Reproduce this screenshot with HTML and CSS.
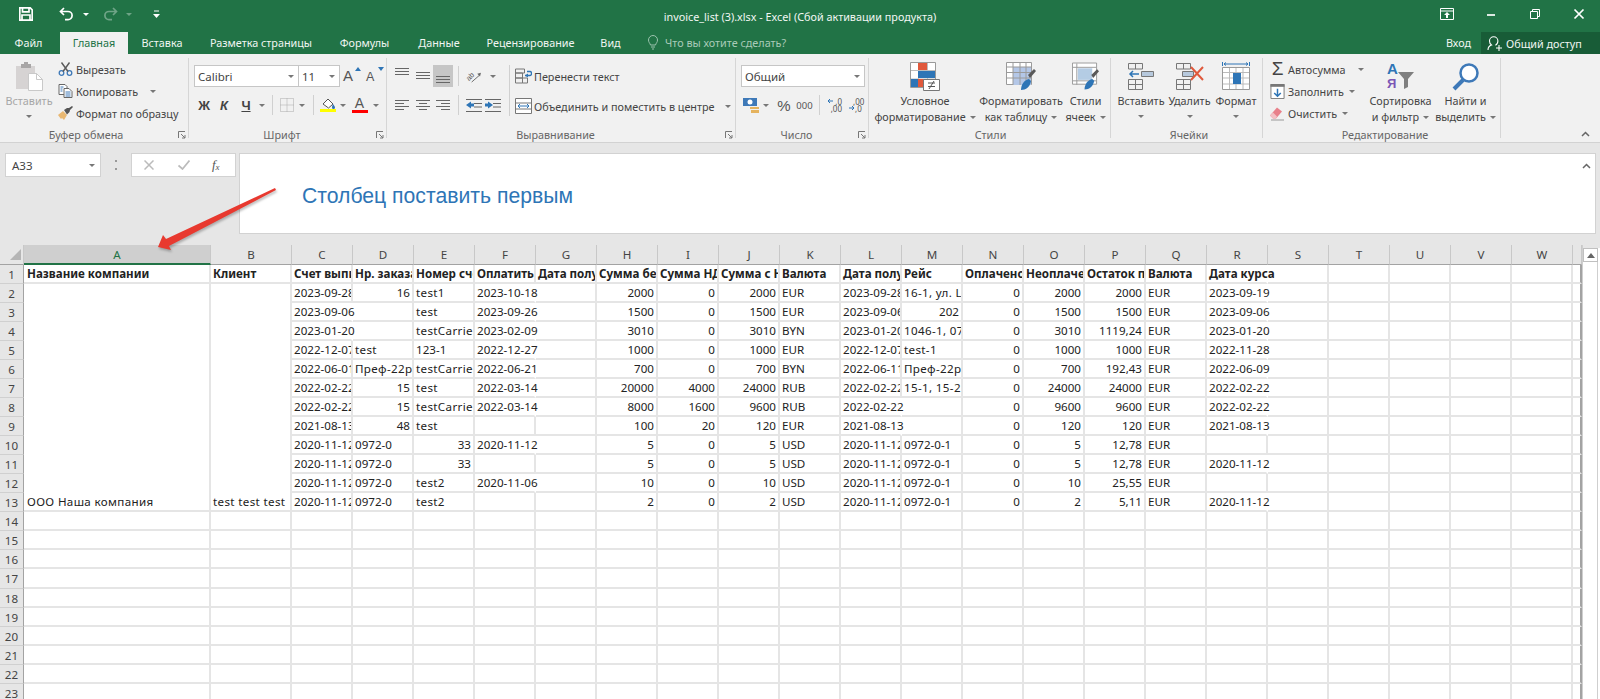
FILE: index.html
```html
<!DOCTYPE html>
<html lang="ru">
<head>
<meta charset="utf-8">
<title>invoice_list (3).xlsx - Excel</title>
<link rel="stylesheet" href="styles.css">
</head>
<body>
<div class="app">
  <header class="titlebar">
    <div class="qat">
      <svg class="q-save" viewBox="0 0 14 14"><path class="wt" d="M.8.8h10.400l2 2v10.400H.8zM3.500.8v4h6.500v-4M3 13.200V8h8v5.200"/></svg>
      <svg class="q-undo" viewBox="0 0 15 14"><path class="wt" d="M5 1 1.500 4.500 5 8M1.500 4.500H9a4 4 0 0 1 0 8.200H6"/></svg>
      <span class="caret white q-c1"></span>
      <svg class="q-redo" viewBox="0 0 15 14"><path class="wt" d="M10 1l3.500 3.500L10 8M13.500 4.500H6a4 4 0 0 0 0 8.200h3"/></svg>
      <span class="caret white dim q-c2"></span>
      <svg class="q-more" viewBox="0 0 7 8"><path class="wl" d="M1 1h5"/><path class="wf" d="M0 4h7L3.500 8z"/></svg>
    </div>
    <div class="doc-title">invoice_list (3).xlsx - Excel (Сбой активации продукта)</div>
    <div class="winbtns">
      <svg class="w-ico" viewBox="0 0 14 12"><path class="wl" d="M.5.500h13v11H.5zM.5 3h13"/><path class="wf" d="M7 4l3 3H8v3H6V7H4z"/></svg>
      <svg class="w-ico" viewBox="0 0 14 12"><path class="wt" d="M3 7h8"/></svg>
      <svg class="w-ico" viewBox="0 0 14 12"><path class="wl" d="M2.500 3.500h7v7h-7zM4.500 3.500v-2h7v7h-2"/></svg>
      <svg class="w-ico" viewBox="0 0 14 12"><path class="wt" d="M2.500 1.500l9 9M11.500 1.500l-9 9"/></svg>
    </div>
  </header>

  <nav class="tabbar">
    <div class="tabs">
      <a class="tab tab-file">Файл</a>
      <a class="tab active">Главная</a>
      <a class="tab">Вставка</a>
      <a class="tab">Разметка страницы</a>
      <a class="tab">Формулы</a>
      <a class="tab">Данные</a>
      <a class="tab">Рецензирование</a>
      <a class="tab">Вид</a>
    </div>
    <svg class="bulb" viewBox="0 0 10 15"><path d="M2.500 10C2 8 .5 7.500.5 5a4.500 4.500 0 0 1 9 0c0 2.500-1.500 3-2 5zM3 12h4M4 14h2"/></svg>
    <span class="tell">Что вы хотите сделать?</span>
    <span class="signin">Вход</span>
    <div class="share">
      <svg class="share-ico" viewBox="0 0 15 15"><path d="M1 14c0-3 2-4.500 3.500-5C3 8 2.500 6.500 2.500 5a4.200 4.200 0 0 1 8.400 0c0 2-1 3.500-2.500 4.200M9 12h6M12 9v6"/></svg>
      <span>Общий доступ</span>
    </div>
  </nav>

  <section class="ribbon">
    <div class="group g-clip">
      <div class="gbody">
        <button class="big disabled b-paste">
          <svg class="i-big" viewBox="0 0 27 29"><path fill="#d6d3d3" d="M0 4h19v23H0z"/><path fill="#a8a6a6" d="M5 2h3V0h4v2h3v4H5z"/><path fill="#fff" stroke="#c9c9c9" d="M12.500 11.500h8l6 6v11h-14z"/><path fill="none" stroke="#c9c9c9" d="M20.500 11.500v6h6"/></svg>
          <span>Вставить</span><span class="caret solo"></span>
        </button>
        <div class="smalls s-clip">
          <div class="small"><svg class="i-s" viewBox="0 0 14 14"><circle cx="3" cy="11" r="2.300" fill="none" stroke="#3e79b8" stroke-width="1.300"/><circle cx="11" cy="11" r="2.300" fill="none" stroke="#3e79b8" stroke-width="1.300"/><path fill="none" stroke="#5a5a5a" stroke-width="1.400" d="M3 .5l6.500 9M11 .5L4.500 9.500"/></svg><span>Вырезать</span></div>
          <div class="small"><svg class="i-s" viewBox="0 0 14 14"><path fill="#fff" stroke="#666" d="M.5.500h6l2 2v8h-8z"/><path fill="#fff" stroke="#666" d="M5.500 4.500h5l3 3v6h-8z"/><path stroke="#3e79b8" d="M7 8h5M7 10h5M7 12h5M2 3h3M2 5h2M2 7h2"/></svg><span>Копировать</span><span class="caret c-copy"></span></div>
          <div class="small"><svg class="i-s" viewBox="0 0 15 14"><path fill="#e9b872" d="M0 9l5-4 4 4-3 5-2-2-1 1z"/><path fill="#555" d="M6 4l3-2 2 0 3-2 1 1-3 3-.5 2-2.500 2.500z"/></svg><span>Формат по образцу</span></div>
        </div>
      </div>
      <div class="glabel launch">Буфер обмена</div>
      <svg class="launcher" viewBox="0 0 8 8"><path d="M.5 7V.5H7M3 3l4 4M4 7h3V4"/></svg>
    </div>

    <div class="group g-font">
      <div class="gbody col">
        <div class="row r-font1">
          <div class="select"><span class="sel-t">Calibri</span><span class="caret"></span></div>
          <div class="select sel-size"><span class="sel-t">11</span><span class="caret"></span></div>
          <div class="fontsz"><span class="aa">A</span><svg class="up" viewBox="0 0 6 4"><path fill="#2e75b6" d="M3 0l3 4H0z"/></svg></div>
          <div class="fontsz"><span class="aa sm">A</span><svg class="up" viewBox="0 0 6 4"><path fill="#2e75b6" d="M3 4l3-4H0z"/></svg></div>
        </div>
        <div class="row r-font2">
          <b class="fmt">Ж</b><b class="fmt it">К</b><b class="fmt un">Ч</b><span class="caret"></span>
          <i class="vsep"></i>
          <svg class="i-s14" viewBox="0 0 14 14"><path fill="none" stroke="#aaa" stroke-dasharray="1 1" d="M.5.500h13v13H.5zM7 .5v13M.5 7h13"/></svg><span class="caret"></span>
          <i class="vsep"></i>
          <span class="colored"><svg class="i-fill" viewBox="0 0 15 11"><path fill="#fff" stroke="#555" d="M2 6l5-5 5 5-4.500 4z"/><path fill="#2e75b6" d="M12 6c1 1.500 2 2.500 2 3.500a1 1 0 0 1-3 0c0-1 .5-2 1-3.500z"/></svg><i class="bar yellow"></i></span><span class="caret"></span>
          <span class="colored"><span class="aa-c">A</span><i class="bar red"></i></span><span class="caret"></span>
        </div>
      </div>
      <div class="glabel launch">Шрифт</div>
      <svg class="launcher" viewBox="0 0 8 8"><path d="M.5 7V.5H7M3 3l4 4M4 7h3V4"/></svg>
    </div>

    <div class="group g-align">
      <div class="gbody">
        <div class="col">
          <div class="row r-align">
            <svg class="i-va" viewBox="0 0 14 16"><path d="M0 .5h14M0 3.500h14M0 6.500h14"/></svg>
            <svg class="i-va" viewBox="0 0 14 16"><path d="M0 4.500h14M0 7.500h14M0 10.500h14"/></svg>
            <span class="hl"><svg class="i-va" viewBox="0 0 14 16"><path d="M0 8.500h14M0 11.500h14M0 14.500h14"/></svg></span>
            <i class="vsep"></i>
            <svg class="i-or" viewBox="0 0 17 14"><text class="or-t" transform="translate(3 12) rotate(-45)">ab</text><path fill="none" stroke="#666" d="M6 13l8-7"/><path fill="#666" d="M12 4l4-1-1 4z"/></svg>
            <span class="caret"></span>
          </div>
          <div class="row r-align">
            <svg class="i-al" viewBox="0 0 14 10"><path d="M0 .5h14M0 3.500h9M0 6.500h14M0 9.500h9"/></svg>
            <svg class="i-al" viewBox="0 0 14 10"><path d="M0 .5h14M3 3.500h8M0 6.500h14M3 9.500h8"/></svg>
            <span class="cellc"><svg class="i-al" viewBox="0 0 14 10"><path d="M0 .5h14M5 3.500h9M0 6.500h14M5 9.500h9"/></svg></span>
            <i class="vsep"></i>
            <svg class="i-or" viewBox="0 0 16 13"><path fill="none" stroke="#666" d="M0 .5h16M8 4.500h8M8 8h8M0 12.500h16"/><path fill="#2e75b6" d="M0 6l5-3.500v2h3v3H5v2z"/></svg>
            <svg class="i-or" viewBox="0 0 16 13"><path fill="none" stroke="#666" d="M0 .5h16M8 4.500h8M8 8h8M0 12.500h16"/><path fill="#2e75b6" d="M8 6L3 2.500v2H0v3h3v2z"/></svg>
          </div>
        </div>
        <i class="vsep tall-sep"></i>
        <div class="col wrapcol">
          <div class="small"><svg class="i-w" viewBox="0 0 17 15"><path fill="none" stroke="#777" d="M.5 .5h9v4h-9zM.5 4.500h7v5h-7zM.5 9.500h7v5h-7zM7.500 9.500h5v5h-5z"/><path fill="none" stroke="#2e75b6" stroke-width="1.300" d="M10 7h5c2 0 2-4 0-4h-3"/><path fill="#2e75b6" d="M10 7l3-2v4z"/></svg><span>Перенести текст</span></div>
          <div class="small sm-merge"><svg class="i-w" viewBox="0 0 17 16"><path fill="#fff" stroke="#777" d="M.5.500h16v15H.5z"/><path stroke="#777" d="M1 5h15M1 11h15"/><path fill="#fff" d="M2 6h13v4H2z"/><path stroke="#2e75b6" d="M3 8h11M3 8l2-2M3 8l2 2M14 8l-2-2M14 8l-2 2"/></svg><span>Объединить и поместить в центре</span><span class="caret c-merge"></span></div>
        </div>
      </div>
      <div class="glabel launch">Выравнивание</div>
      <svg class="launcher" viewBox="0 0 8 8"><path d="M.5 7V.5H7M3 3l4 4M4 7h3V4"/></svg>
    </div>

    <div class="group g-num">
      <div class="gbody col">
        <div class="select sel-num"><span class="sel-t">Общий</span><span class="caret"></span></div>
        <div class="row r-num">
          <svg class="i-cur" viewBox="0 0 16 15"><path fill="#3e79b8" d="M0 0h14v8H0z"/><ellipse cx="7" cy="4" rx="2.500" ry="2.500" fill="#fff"/><path fill="#e5b35e" d="M7 9h9v2H7zM8 12h8v3H8z"/></svg>
          <span class="caret"></span>
          <span class="pct">%</span>
          <span class="thou">000</span>
          <i class="vsep"></i>
          <span class="dec"><svg viewBox="0 0 15 14"><path fill="none" stroke="#2e75b6" d="M6 3H1M3 1L1 3l2 2"/></svg><em class="d1">,0</em><em class="d2">,00</em></span>
          <span class="dec"><svg viewBox="0 0 15 14"><path fill="none" stroke="#2e75b6" d="M1 10h5M4 8l2 2-2 2"/></svg><em class="d1 d3">,00</em><em class="d2 d4">,0</em></span>
        </div>
      </div>
      <div class="glabel launch">Число</div>
      <svg class="launcher" viewBox="0 0 8 8"><path d="M.5 7V.5H7M3 3l4 4M4 7h3V4"/></svg>
    </div>

    <div class="group g-styles">
      <div class="gbody">
        <button class="big b-cond">
          <svg class="i-big i-w30" viewBox="0 0 30 29"><path fill="#fff" stroke="#9a9a9a" d="M.5.500h25v25H.5z"/><path stroke="#bdbdbd" d="M8.500 1v24M17.500 1v24M1 8.500h24M1 17h24"/><path fill="#e0593c" d="M8 1h9v7H8z"/><path fill="#2e75b6" d="M8 9h17v7H8z"/><path fill="#e0593c" d="M8 17h8v8H8z"/><path fill="#2e75b6" d="M1 17h7v8H1z"/><path fill="#fff" stroke="#777" d="M13.500 17.500h16v11h-16z"/><path stroke="#555" fill="none" d="M18 21h7M18 24.500h7M19 27l5-8"/></svg>
          <span>Условное</span><span>форматирование<i class="caret in"></i></span>
        </button>
        <button class="big b-tbl">
          <svg class="i-big i-w30" viewBox="0 0 30 29"><path fill="#fff" stroke="#9a9a9a" d="M.5.500h25v22H.5z"/><path fill="#b4c7e7" d="M7 5h18v18H7z"/><path stroke="#9a9a9a" d="M7 1v22M14 1v22M20 1v22M1 5h24M1 10.500h24M1 16h24"/><path fill="#595959" d="M22 13l6-6 2 2-6 7z"/><path fill="#2e75b6" d="M15 28c0-5 3-10 8-11l2 2c-1 6-5 9-10 9z"/></svg>
          <span>Форматировать</span><span>как таблицу<i class="caret in"></i></span>
        </button>
        <button class="big b-cst">
          <svg class="i-big i-w27" viewBox="0 0 28 29"><path fill="#fff" stroke="#9a9a9a" d="M.5.500h25v22H.5z"/><path stroke="#9a9a9a" d="M1 5h24M1 19h24M5 1v22"/><path fill="#b4cce4" d="M6 6h15v12H6z"/><path fill="#595959" d="M20 13l6-6 2 2-6 7z"/><path fill="#2e75b6" d="M13 28c0-5 3-10 8-11l2 2c-1 6-5 9-10 9z"/></svg>
          <span>Стили</span><span>ячеек<i class="caret in"></i></span>
        </button>
      </div>
      <div class="glabel">Стили</div>
    </div>

    <div class="group g-cells">
      <div class="gbody">
        <button class="big b-ins">
          <svg class="i-big i-w26" viewBox="0 0 26 29"><path fill="none" stroke="#777" d="M.5 1.500h14v5.500H.5zM7.500 1.500v5.500M.5 17.500h14v10H.5zM7.500 17.500v10M.5 22.500h14"/><path fill="#b7c9dd" stroke="#777" d="M13.500 9.500h12v5h-12z"/><path fill="none" stroke="#2e75b6" stroke-width="1.500" d="M2 12h9M5 9l-3 3 3 3"/></svg>
          <span>Вставить</span><span class="caret solo"></span>
        </button>
        <button class="big b-del">
          <svg class="i-big i-w28" viewBox="0 0 28 29"><path fill="none" stroke="#777" d="M.5 1.500h14v5.500H.5zM7.500 1.500v5.500M.5 17.500h14v10H.5zM7.500 17.500v10M.5 22.500h14"/><path fill="#b7c9dd" stroke="#777" d="M6.500 9.500h11v5h-11z"/><path fill="none" stroke="#e0593c" stroke-width="2" d="M15 5l12 13M27 5L15 18"/></svg>
          <span>Удалить</span><span class="caret solo"></span>
        </button>
        <button class="big b-fmt">
          <svg class="i-big i-w28" viewBox="0 0 28 29"><path fill="#fff" stroke="#999" d="M.5 5.500h27v22H.5z"/><path stroke="#bbb" d="M7.500 6v21M14 6v21M21 6v21M1 10.500h26M1 16h26M1 22h26"/><path fill="#2e75b6" d="M11 11h8v11h-8z"/><path fill="none" stroke="#2e75b6" d="M.5 0v4M27.500 0v4M2 2h24M2 2l2-1.500M2 2l2 1.500M26 2l-2-1.500M26 2l-2 1.500"/></svg>
          <span>Формат</span><span class="caret solo"></span>
        </button>
      </div>
      <div class="glabel">Ячейки</div>
    </div>

    <div class="group g-edit">
      <div class="gbody">
        <div class="smalls s-edit">
          <div class="small"><span class="sigma">Σ</span><span>Автосумма</span><span class="caret c-sum"></span></div>
          <div class="small"><svg class="i-e" viewBox="0 0 15 16"><path fill="#fff" stroke="#777" d="M.5.500h14v15H.5z"/><path fill="#777" d="M0 0h15v3H0z"/><path fill="none" stroke="#2e75b6" stroke-width="1.600" d="M7.500 5v8M4 9.500l3.500 3.500 3.500-3.500"/></svg><span>Заполнить</span><span class="caret c-fill"></span></div>
          <div class="small"><svg class="i-e" viewBox="0 0 15 14"><path fill="#e8808a" d="M0 9l7-8 5 4-6 7H3z"/><path fill="#f3c0c4" d="M3 12L0 9l3-3 4 4-1 2z"/><path stroke="#999" d="M1 13.500h13"/></svg><span>Очистить</span><span class="caret c-clr"></span></div>
        </div>
        <button class="big b-sort">
          <svg class="i-big i-w28" viewBox="0 0 28 29"><text class="sort-a" x="0" y="12">A</text><text class="sort-z" x="0" y="26">Я</text><path fill="#7f7f7f" d="M11 10h16l-6 7v8l-4 2V17z"/></svg>
          <span>Сортировка</span><span>и фильтр<i class="caret in"></i></span>
        </button>
        <button class="big b-find">
          <svg class="i-big i-w27" viewBox="0 0 27 29"><circle cx="17" cy="11" r="8.500" fill="#fff" stroke="#3e79b8" stroke-width="2.500"/><path stroke="#3e79b8" stroke-width="4" d="M2 27l9-9"/></svg>
          <span>Найти и</span><span>выделить<i class="caret in"></i></span>
        </button>
      </div>
      <div class="glabel">Редактирование</div>
    </div>
    <svg class="collapse" viewBox="0 0 9 6"><path d="M1 5l3.500-3.500L8 5"/></svg>
  </section>

  <section class="formula">
    <div class="namebox"><span>A33</span><span class="caret"></span></div>
    <span class="dots"></span>
    <div class="fbtns">
      <svg class="fx-x" viewBox="0 0 10 10"><path d="M.5.500l9 9M9.500.5l-9 9"/></svg>
      <svg class="fx-c" viewBox="0 0 12 10"><path d="M.5 5.500l4 3.500 7-8.500"/></svg>
      <span class="fx">f<sub>x</sub></span>
    </div>
    <div class="fbar">
      <span class="ftext">Столбец поставить первым</span>
      <svg class="fcollapse" viewBox="0 0 9 6"><path d="M1 5l3.500-3.500L8 5"/></svg>
    </div>
  </section>

  <section class="sheet">
    <table class="grid">
      <colgroup>
        <col class="c-r"><col class="c-a"><col class="c-b">
        <col class="c-n" span="21"><col class="c-x">
      </colgroup>
      <thead>
        <tr>
          <th class="corner"><svg viewBox="0 0 11 11"><path d="M11 0v11H0z"/></svg></th>
          <th class="sel">A</th><th>B</th><th>C</th><th>D</th><th>E</th><th>F</th><th>G</th><th>H</th><th>I</th><th>J</th><th>K</th><th>L</th><th>M</th><th>N</th><th>O</th><th>P</th><th>Q</th><th>R</th><th>S</th><th>T</th><th>U</th><th>V</th><th>W</th><th></th>
        </tr>
      </thead>
      <tbody>
        <tr class="bold"><th>1</th><td class="pa">Название компании</td><td>Клиент</td><td>Счет выписан</td><td>Нр. заказа</td><td>Номер счета</td><td>Оплатить до</td><td>Дата получения</td><td>Сумма без НДС</td><td>Сумма НДС</td><td>Сумма с НДС</td><td>Валюта</td><td>Дата получения</td><td>Рейс</td><td>Оплачено</td><td>Неоплачено</td><td>Остаток по</td><td>Валюта</td><td class="of">Дата курса</td><td></td><td></td><td></td><td></td><td></td><td></td></tr>
        <tr><th>2</th><td rowspan="12" class="t pa">ООО Наша компания</td><td rowspan="12" class="t">test test test</td><td>2023-09-28</td><td class="r">16</td><td class="t">test1</td><td class="of">2023-10-18</td><td></td><td class="r">2000</td><td class="r">0</td><td class="r">2000</td><td>EUR</td><td>2023-09-28</td><td class="t">16-1, ул. Lenina</td><td class="r">0</td><td class="r">2000</td><td class="r">2000</td><td>EUR</td><td class="of">2023-09-19</td><td></td><td></td><td></td><td></td><td></td><td></td></tr>
        <tr><th>3</th><td class="of">2023-09-06</td><td></td><td class="t">test</td><td class="of">2023-09-26</td><td></td><td class="r">1500</td><td class="r">0</td><td class="r">1500</td><td>EUR</td><td>2023-09-06</td><td class="r">202</td><td class="r">0</td><td class="r">1500</td><td class="r">1500</td><td>EUR</td><td class="of">2023-09-06</td><td></td><td></td><td></td><td></td><td></td><td></td></tr>
        <tr><th>4</th><td class="of">2023-01-20</td><td></td><td class="t">testCarrier</td><td class="of">2023-02-09</td><td></td><td class="r">3010</td><td class="r">0</td><td class="r">3010</td><td>BYN</td><td>2023-01-20</td><td class="t">1046-1, 07-1</td><td class="r">0</td><td class="r">3010</td><td class="r">1119,24</td><td>EUR</td><td class="of">2023-01-20</td><td></td><td></td><td></td><td></td><td></td><td></td></tr>
        <tr><th>5</th><td>2022-12-07</td><td class="t">test</td><td>123-1</td><td class="of">2022-12-27</td><td></td><td class="r">1000</td><td class="r">0</td><td class="r">1000</td><td>EUR</td><td>2022-12-07</td><td class="t">test-1</td><td class="r">0</td><td class="r">1000</td><td class="r">1000</td><td>EUR</td><td class="of">2022-11-28</td><td></td><td></td><td></td><td></td><td></td><td></td></tr>
        <tr><th>6</th><td>2022-06-01</td><td class="t">Преф-22р</td><td class="t">testCarrier</td><td class="of">2022-06-21</td><td></td><td class="r">700</td><td class="r">0</td><td class="r">700</td><td>BYN</td><td>2022-06-11</td><td class="t">Преф-22р</td><td class="r">0</td><td class="r">700</td><td class="r">192,43</td><td>EUR</td><td class="of">2022-06-09</td><td></td><td></td><td></td><td></td><td></td><td></td></tr>
        <tr><th>7</th><td>2022-02-22</td><td class="r">15</td><td class="t">test</td><td class="of">2022-03-14</td><td></td><td class="r">20000</td><td class="r">4000</td><td class="r">24000</td><td>RUB</td><td>2022-02-22</td><td class="t">15-1, 15-2, 15-3</td><td class="r">0</td><td class="r">24000</td><td class="r">24000</td><td>EUR</td><td class="of">2022-02-22</td><td></td><td></td><td></td><td></td><td></td><td></td></tr>
        <tr><th>8</th><td>2022-02-22</td><td class="r">15</td><td class="t">testCarrier</td><td class="of">2022-03-14</td><td></td><td class="r">8000</td><td class="r">1600</td><td class="r">9600</td><td>RUB</td><td class="of">2022-02-22</td><td></td><td class="r">0</td><td class="r">9600</td><td class="r">9600</td><td>EUR</td><td class="of">2022-02-22</td><td></td><td></td><td></td><td></td><td></td><td></td></tr>
        <tr><th>9</th><td>2021-08-13</td><td class="r">48</td><td class="t">test</td><td></td><td></td><td class="r">100</td><td class="r">20</td><td class="r">120</td><td>EUR</td><td class="of">2021-08-13</td><td></td><td class="r">0</td><td class="r">120</td><td class="r">120</td><td>EUR</td><td class="of">2021-08-13</td><td></td><td></td><td></td><td></td><td></td><td></td></tr>
        <tr><th>10</th><td>2020-11-12</td><td>0972-0</td><td class="r">33</td><td class="of">2020-11-12</td><td></td><td class="r">5</td><td class="r">0</td><td class="r">5</td><td>USD</td><td>2020-11-12</td><td>0972-0-1</td><td class="r">0</td><td class="r">5</td><td class="r">12,78</td><td>EUR</td><td></td><td></td><td></td><td></td><td></td><td></td><td></td></tr>
        <tr><th>11</th><td>2020-11-12</td><td>0972-0</td><td class="r">33</td><td></td><td></td><td class="r">5</td><td class="r">0</td><td class="r">5</td><td>USD</td><td>2020-11-12</td><td>0972-0-1</td><td class="r">0</td><td class="r">5</td><td class="r">12,78</td><td>EUR</td><td class="of">2020-11-12</td><td></td><td></td><td></td><td></td><td></td><td></td></tr>
        <tr><th>12</th><td>2020-11-12</td><td>0972-0</td><td class="t">test2</td><td class="of">2020-11-06</td><td></td><td class="r">10</td><td class="r">0</td><td class="r">10</td><td>USD</td><td>2020-11-12</td><td>0972-0-1</td><td class="r">0</td><td class="r">10</td><td class="r">25,55</td><td>EUR</td><td></td><td></td><td></td><td></td><td></td><td></td><td></td></tr>
        <tr><th>13</th><td>2020-11-12</td><td>0972-0</td><td class="t">test2</td><td></td><td></td><td class="r">2</td><td class="r">0</td><td class="r">2</td><td>USD</td><td>2020-11-12</td><td>0972-0-1</td><td class="r">0</td><td class="r">2</td><td class="r">5,11</td><td>EUR</td><td class="of">2020-11-12</td><td></td><td></td><td></td><td></td><td></td><td></td></tr>
        <tr><th>14</th><td></td><td></td><td></td><td></td><td></td><td></td><td></td><td></td><td></td><td></td><td></td><td></td><td></td><td></td><td></td><td></td><td></td><td></td><td></td><td></td><td></td><td></td><td></td><td></td></tr>
        <tr><th>15</th><td></td><td></td><td></td><td></td><td></td><td></td><td></td><td></td><td></td><td></td><td></td><td></td><td></td><td></td><td></td><td></td><td></td><td></td><td></td><td></td><td></td><td></td><td></td><td></td></tr>
        <tr><th>16</th><td></td><td></td><td></td><td></td><td></td><td></td><td></td><td></td><td></td><td></td><td></td><td></td><td></td><td></td><td></td><td></td><td></td><td></td><td></td><td></td><td></td><td></td><td></td><td></td></tr>
        <tr class="tall"><th>17</th><td></td><td></td><td></td><td></td><td></td><td></td><td></td><td></td><td></td><td></td><td></td><td></td><td></td><td></td><td></td><td></td><td></td><td></td><td></td><td></td><td></td><td></td><td></td><td></td></tr>
        <tr><th>18</th><td></td><td></td><td></td><td></td><td></td><td></td><td></td><td></td><td></td><td></td><td></td><td></td><td></td><td></td><td></td><td></td><td></td><td></td><td></td><td></td><td></td><td></td><td></td><td></td></tr>
        <tr><th>19</th><td></td><td></td><td></td><td></td><td></td><td></td><td></td><td></td><td></td><td></td><td></td><td></td><td></td><td></td><td></td><td></td><td></td><td></td><td></td><td></td><td></td><td></td><td></td><td></td></tr>
        <tr><th>20</th><td></td><td></td><td></td><td></td><td></td><td></td><td></td><td></td><td></td><td></td><td></td><td></td><td></td><td></td><td></td><td></td><td></td><td></td><td></td><td></td><td></td><td></td><td></td><td></td></tr>
        <tr><th>21</th><td></td><td></td><td></td><td></td><td></td><td></td><td></td><td></td><td></td><td></td><td></td><td></td><td></td><td></td><td></td><td></td><td></td><td></td><td></td><td></td><td></td><td></td><td></td><td></td></tr>
        <tr><th>22</th><td></td><td></td><td></td><td></td><td></td><td></td><td></td><td></td><td></td><td></td><td></td><td></td><td></td><td></td><td></td><td></td><td></td><td></td><td></td><td></td><td></td><td></td><td></td><td></td></tr>
        <tr><th>23</th><td></td><td></td><td></td><td></td><td></td><td></td><td></td><td></td><td></td><td></td><td></td><td></td><td></td><td></td><td></td><td></td><td></td><td></td><td></td><td></td><td></td><td></td><td></td><td></td></tr>
      </tbody>
    </table>
    <div class="vscroll">
      <div class="vs-top"></div>
      <div class="vs-up"><svg viewBox="0 0 8 5"><path d="M4 0l4 5H0z"/></svg></div>
      <div class="vs-track"></div>
    </div>
  </section>

  <svg class="arrow" viewBox="0 0 126 66"><path d="M124 0 L125 2 L18 58 L20 62 L7 59 L12 47 L15 51z"/></svg>
</div>
</body>
</html>
```

FILE: styles.css
```css
* { box-sizing: border-box; }
html, body { margin: 0; padding: 0; height: 699px; overflow: hidden; }
body { font-family: "Noto Sans", "Open Sans", sans-serif; font-size: 10.8px; color: #444; background: #e6e6e6; }
.app { position: relative; width: 1600px; height: 699px; overflow: hidden; display: flex; flex-direction: column; }
button { font: inherit; color: inherit; background: none; border: 0; padding: 0; }
svg { display: block; flex: none; }
i, em { font-style: normal; }

/* title bar */
.titlebar { height: 32px; background: #217346; position: relative; display: flex; color: #fff; flex: none; }
.wl, .wt { fill: none; stroke: #fff; }
.wt { stroke-width: 1.700; }
.wf { fill: #fff; }
.qat { display: flex; align-items: center; padding-left: 19px; height: 28px; }
.q-save { width: 14px; height: 14px; }
.q-undo { width: 15px; height: 14px; margin-left: 26px; }
.q-c1 { margin-left: 9px; }
.q-redo { width: 15px; height: 14px; margin-left: 14px; opacity: .35; }
.q-c2 { margin-left: 8px; }
.q-more { width: 7px; height: 8px; margin-left: 21px; }
.doc-title { position: absolute; left: 0; right: 0; top: 8px; text-align: center; line-height: 18px; color: #f2f7f4; }
.winbtns { margin-left: auto; display: flex; align-items: center; height: 28px; padding-right: 14px; }
.w-ico { width: 14px; height: 12px; margin-left: 30px; }

/* tabs */
.tabbar { height: 22px; background: #217346; display: flex; align-items: stretch; color: #f1f6f3; flex: none; position: relative; }
.tabs { display: grid; grid-template-columns: 60px 68px 68px 130px 77px 72px 111px 49px; }
.tab { display: flex; align-items: center; justify-content: center; line-height: 22px; }
.tab-file { padding-right: 3px; }
.tab.active { background: #f1f1f1; color: #217346; }
.bulb { width: 10px; height: 15px; margin: 3px 0 0 13px; fill: none; stroke: #9cc3ae; }
.tell { color: #a9cbb8; margin-left: 7px; line-height: 22px; }
.signin { margin-left: auto; line-height: 22px; margin-right: 10px; }
.share { width: 119px; background: #185c37; display: flex; align-items: center; padding-left: 6px; gap: 4px; }
.share-ico { width: 15px; height: 15px; fill: none; stroke: #fff; stroke-width: 1.100; }

/* ribbon */
.ribbon { height: 89px; background: #f1f1f1; border-bottom: 1px solid #d2d2d2; display: flex; padding-top: 4px; position: relative; flex: none; color: #444; }
.group { height: 80px; border-right: 1px solid #d6d6d6; display: flex; flex-direction: column; position: relative; flex: none; }
.gbody { height: 66px; display: flex; flex: none; }
.col { display: flex; flex-direction: column; }
.glabel { text-align: center; color: #666; line-height: 14px; height: 14px; margin-top: 4px; flex: none; }
.glabel.launch { padding-right: 16px; }
.launcher { position: absolute; right: 2px; bottom: -1px; width: 8px; height: 8px; fill: none; stroke: #777; }
.g-clip { width: 189px; }
.g-font { width: 198px; padding-left: 5px; }
.g-align { width: 349px; padding-left: 5px; }
.g-num { width: 133px; padding-left: 5px; }
.g-styles { width: 242px; padding-left: 2px; }
.g-cells { width: 152px; padding-left: 5px; }
.g-edit { width: 238px; padding-left: 7px; }
.caret { display: inline-block; width: 0; height: 0; border-left: 3px solid transparent; border-right: 3px solid transparent; border-top: 3px solid #777; flex: none; }
.caret.white { border-top-color: #fff; }
.caret.dim { opacity: .35; }
.caret.in { margin: 0 0 2px 4px; vertical-align: middle; }
.big { display: flex; flex-direction: column; align-items: center; line-height: 16px; white-space: nowrap; }
.big .caret.solo { margin-top: 6px; }
.i-big { height: 29px; width: 27px; margin: 4px 0 2px; }
.i-w30 { width: 30px; }
.i-w27 { width: 27px; }
.i-w26 { width: 26px; }
.i-w28 { width: 28px; }
.disabled { color: #a6a6a6; }
.b-paste { width: 58px; }
.b-cond { width: 108px; }
.b-tbl { width: 84px; }
.b-cst { width: 45px; }
.b-ins { width: 50px; }
.b-del { width: 47px; }
.b-fmt { width: 46px; }
.b-sort { width: 67px; }
.b-find { width: 63px; }
.smalls { display: flex; flex-direction: column; }
.s-edit { width: 97px; }
.small { height: 22px; display: flex; align-items: center; white-space: nowrap; }
.i-s { width: 15px; height: 14px; margin-right: 3px; }
.c-copy { margin-left: 12px; }
.sigma { width: 15px; font-size: 19px; line-height: 18px; color: #444; margin-right: 3px; text-align: center; font-family: "Liberation Sans", sans-serif; }
.i-e { width: 15px; height: 15px; margin-right: 3px; }
.c-sum { margin-left: 12px; }
.c-fill { margin-left: 5px; }
.c-clr { margin-left: 5px; }

/* font group */
.row { display: grid; align-items: center; justify-items: center; }
.r-font1 { grid-template-columns: 105px 41px 24px 22px; height: 22px; margin-top: 7px; }
.r-font2 { grid-template-columns: 20px 20px 24px 7px 14px 16px 14px 8px 22px 8px 25px 8px; height: 22px; margin-top: 7px; }
.select { height: 22px; width: 100%; background: #fff; border: 1px solid #c6c6c6; display: flex; align-items: center; justify-content: space-between; padding: 0 4px 0 3px; color: #444; }
.sel-t { font-size: 11.500px; }
.sel-size { border-left: 0; }
.fontsz { position: relative; display: flex; width: 18px; height: 20px; color: #555; }
.aa { font-size: 15px; line-height: 20px; font-family: "Liberation Sans", sans-serif; }
.aa.sm { font-size: 12.500px; line-height: 22px; }
.up { position: absolute; right: 0; top: 1px; width: 6px; height: 4px; }
.fmt { font-size: 13px; font-family: "Liberation Sans", sans-serif; color: #444; }
.it { font-style: italic; }
.un { text-decoration: underline; }
.vsep { width: 1px; height: 20px; background: #d0d0d0; display: block; }
.i-s14 { width: 14px; height: 14px; }
.colored { display: flex; flex-direction: column; align-items: center; width: 16px; }
.i-fill { width: 15px; height: 11px; }
.bar { display: block; width: 16px; height: 3px; }
.yellow { background: #ffff00; }
.red { background: #ff0000; }
.aa-c { font-size: 14px; line-height: 13px; font-family: "Liberation Sans", sans-serif; color: #555; }

/* alignment */
.r-align { grid-template-columns: 20px 21px 20px 10px 21px 18px; height: 22px; margin-top: 7px; justify-items: center; }
.i-al { width: 14px; height: 10px; fill: none; stroke: #666; }
.i-va { width: 14px; height: 16px; fill: none; stroke: #666; }
.hl { width: 20px; height: 22px; background: #c6c6c6; display: flex; align-items: center; justify-content: center; }
.cellc { display: flex; width: 20px; justify-content: center; }
.i-or { width: 16px; height: 13px; }
.or-t { font: 8px "Liberation Sans", sans-serif; fill: #555; }
.tall-sep { height: 51px; margin: 7px 5px 0 7px; }
.wrapcol { padding-top: 7px; }
.sm-merge { margin-top: 8px; }
.i-w { width: 17px; height: 16px; margin-right: 2px; }
.c-merge { margin-left: 10px; }

/* number */
.sel-num { width: 124px; margin-top: 7px; flex: none; }
.r-num { grid-template-columns: 20px 10px 26px 15px 14px 17px 4px 17px; height: 22px; margin-top: 7px; }
.i-cur { width: 16px; height: 15px; }
.pct { font-size: 15px; font-family: "Liberation Sans", sans-serif; color: #555; }
.thou { font-size: 9.500px; color: #555; }
.dec { position: relative; width: 15px; height: 14px; font-size: 8px; line-height: 7px; color: #555; }
.dec:last-child { grid-column: 8; }
.dec svg { position: absolute; inset: 0; width: 15px; height: 14px; }
.dec em { position: absolute; }
.d1 { right: 0; top: 0; }
.d2 { right: 0; top: 7px; }
.d3 { left: 5px; right: auto; }
.d4 { left: 7px; right: auto; }

/* sort text */
.sort-a { font: bold 15px "Liberation Sans", sans-serif; fill: #2e75b6; }
.sort-z { font: bold 13px "Liberation Sans", sans-serif; fill: #7b56b5; }
.collapse { position: absolute; left: 1581px; bottom: 5px; width: 9px; height: 6px; fill: none; stroke: #666; stroke-width: 1.500; }

/* formula area */
.formula { height: 102px; padding: 10px 4px 0 5px; display: flex; align-items: flex-start; flex: none; background: #e6e6e6; }
.namebox { width: 96px; height: 24px; background: #fff; border: 1px solid #d2d2d2; display: flex; align-items: center; justify-content: space-between; padding: 0 5px 0 6px; font-size: 11.500px; }
.dots { width: 2px; height: 10px; margin: 7px 14px 0 14px; border-top: 2px dotted #999; border-bottom: 2px dotted #999; flex: none; }
.fbtns { width: 105px; height: 24px; background: #fff; border: 1px solid #d2d2d2; display: flex; align-items: center; flex: none; padding-left: 12px; }
.fx-x { width: 10px; height: 10px; fill: none; stroke: #bbb; stroke-width: 1.500; }
.fx-c { width: 12px; height: 10px; fill: none; stroke: #bbb; stroke-width: 1.700; margin-left: 24px; }
.fx { margin-left: 22px; font: italic 13px "Liberation Serif", serif; color: #555; }
.fx sub { font-size: 9px; vertical-align: -1px; line-height: 0; }
.fbar { margin-left: 3px; width: 1358px; height: 81px; background: #fff; border: 1px solid #d2d2d2; position: relative; padding: 27px 0 0 62px; }
.ftext { font: 21.200px/30px "Liberation Sans", Arial, sans-serif; color: #2e75b6; }
.fcollapse { position: absolute; right: 4px; top: 9px; width: 9px; height: 6px; fill: none; stroke: #666; stroke-width: 1.500; }

/* sheet */
.sheet { flex: 1; display: flex; overflow: hidden; background: #fff; }
.grid { border-collapse: separate; border-spacing: 0; table-layout: fixed; width: 1582px; flex: none; font-size: 11.600px; color: #222; }
.c-r { width: 24px; }
.c-a { width: 187px; }
.c-b { width: 81px; }
.c-n { width: 61px; }
.c-x { width: 9px; }
.grid tr { height: 19px; }
.grid tr.tall { height: 20px; }
.grid td { padding: 0 2px 0 2px; height: 19px; border-right: 2px solid #e5e5e5; border-bottom: 2px solid #e5e5e5; white-space: nowrap; overflow: hidden; line-height: 17px; vertical-align: bottom; }
.grid td.of { overflow: visible; border-right-color: transparent; }
.grid td.r { text-align: right; }
.grid td.t { letter-spacing: .35px; }
.grid td.pa { padding-left: 3px; }
.bold td { font-weight: 700; }
.grid th { background: #e6e6e6; font-weight: 400; color: #444; padding: 0; text-align: center; border-right: 1px solid #c8c8c8; border-bottom: 1px solid #d0d0d0; line-height: 17px; overflow: hidden; }
.grid thead tr { height: 20px; }
.grid thead th { height: 20px; border-bottom: 1px solid #a3a3a3; }
.grid thead th.sel { background: #cfcfcf; color: #217346; border-bottom: 2px solid #217346; }
.grid tbody th { border-right: 1px solid #a3a3a3; }
.corner svg { width: 11px; height: 11px; margin-left: 10px; fill: #b5b5b5; }
.grid tr > td:last-child { border-right: 2px solid #a3a3a3; }
.vscroll { flex: none; width: 18px; display: flex; flex-direction: column; background: #fff; border-left: 1px solid #cfcfcf; }
.vs-top { height: 3px; background: #e6e6e6; }
.vs-up { height: 14px; border: 1px solid #c0c0c0; display: flex; align-items: center; justify-content: center; width: 15px; background: #fff; }
.vs-up svg { width: 8px; height: 5px; fill: #666; }
.vs-track { flex: 1; width: 15px; border-right: 1px solid #cfcfcf; }

/* annotation */
.arrow { position: absolute; left: 151px; top: 188px; width: 126px; height: 66px; fill: #e8392f; filter: drop-shadow(1px 2px 1px rgba(0, 0, 0, .25)); }
```
